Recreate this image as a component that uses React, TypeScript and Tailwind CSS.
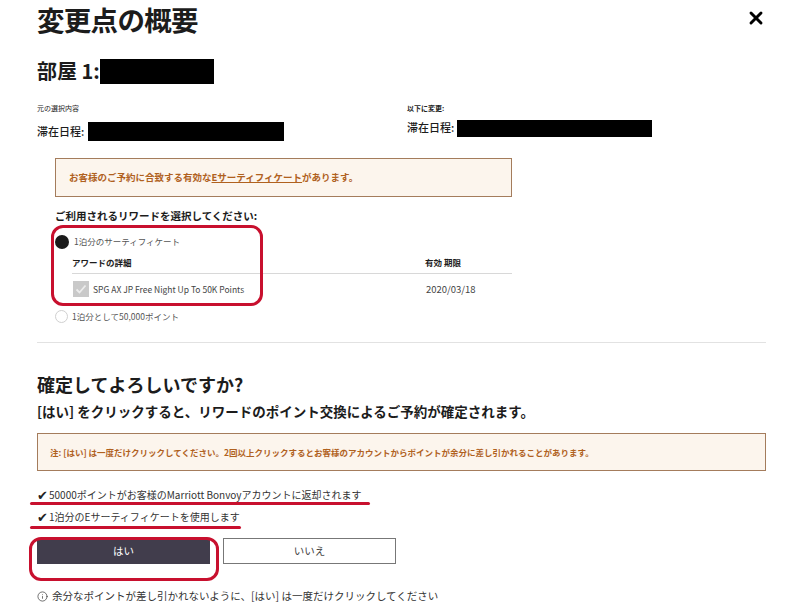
import React from 'react';
import { X, Info } from 'lucide-react';

const jp = { fontFamily: '"Noto Sans CJK JP", "Noto Sans", sans-serif' };

const Redacted: React.FC<{ w: number; h: number }> = ({ w, h }) => (
  <span className="inline-block bg-black align-middle" style={{ width: w, height: h }} />
);

const App: React.FC = () => {
  return (
    <div className="relative w-[800px] h-[608px] overflow-hidden bg-white text-[#1c1c1c]" style={jp}>
      <div className="pl-[37px] pr-[34px]">
        {/* Header */}
        <div className="flex items-start justify-between pt-[4px]">
          <h1 className="text-[27.5px] leading-[30px] font-bold tracking-tight">変更点の概要</h1>
          <X size={20} strokeWidth={3.5} className="mt-[4px] text-black" />
        </div>

        {/* Room */}
        <div className="mt-[24px] flex items-center h-[26px]">
          <span className="text-[20px] font-bold leading-none">部屋 1:</span>
          <span className="inline-block w-[114px] h-[25px] bg-black" />
        </div>

        {/* Dates */}
        <div className="mt-[19px] grid grid-cols-[370px_1fr]">
          <div>
            <div className="text-[7px] leading-[10px]">元の選択内容</div>
            <div className="mt-[8px] flex items-center text-[11px] font-medium">
              <span>滞在日程:</span>
              <span className="ml-[4px]"><Redacted w={196} h={19} /></span>
            </div>
          </div>
          <div>
            <div className="text-[7px] leading-[10px] font-bold">以下に変更:</div>
            <div className="mt-[5px] flex items-center text-[11px] font-medium">
              <span>滞在日程:</span>
              <span className="ml-[3px]"><Redacted w={195} h={17} /></span>
            </div>
          </div>
        </div>

        {/* Certificate notice */}
        <div className="mt-[17px] ml-[18px] w-[457px] h-[39px] border border-[#a47c5c] bg-[#fcf5ed] flex items-center px-[13px]">
          <span className="text-[9.5px] font-bold text-[#b0611e]">
            お客様のご予約に合致する有効な<span className="underline">Eサーティフィケート</span>があります。
          </span>
        </div>

        {/* Reward selection */}
        <div className="ml-[18px] w-[457px]">
          <div className="mt-[12px] text-[10.5px] font-bold leading-[14px]">ご利用されるリワードを選択してください:</div>
          <div className="mt-[12px] flex items-center">
            <span className="w-[14px] h-[14px] rounded-full bg-[#1a1a1a]" />
            <span className="ml-[5px] text-[8.5px] text-[#555]">1泊分のサーティフィケート</span>
          </div>
          <div className="ml-[17px] mt-[7px] flex text-[8.5px] font-bold pb-[5px] border-b border-[#d8d8d8]">
            <span className="w-[353px]">アワードの詳細</span>
            <span>有効 期限</span>
          </div>
          <div className="ml-[18px] mt-[7px] flex items-center">
            <span className="w-[16px] h-[16px] bg-[#c9c9c9] flex items-center justify-center">
              <svg width="12" height="12" viewBox="0 0 12 12">
                <path d="M1.5 6.5 L4.5 9.5 L10.5 2.5" fill="none" stroke="#ececec" strokeWidth="1.8" />
              </svg>
            </span>
            <span className="ml-[4px] w-[333px] text-[8.5px] text-[#444]">SPG AX JP Free Night Up To 50K Points</span>
            <span className="text-[9.5px] text-[#444]">2020/03/18</span>
          </div>
          <div className="mt-[13px] flex items-center">
            <span className="w-[13px] h-[13px] rounded-full border border-[#d0d0d0] bg-white" />
            <span className="ml-[4px] text-[8.5px] text-[#555]">1泊分として50,000ポイント</span>
          </div>
        </div>

        <div className="mt-[19px] border-t border-[#e2e2e2]" />

        {/* Confirm */}
        <h2 className="mt-[30px] text-[18px] font-bold leading-[22px]">確定してよろしいですか?</h2>
        <p className="mt-[7px] text-[13.5px] font-bold leading-[18px]">
          [はい] をクリックすると、リワードのポイント交換によるご予約が確定されます。
        </p>

        <div className="mt-[13px] h-[38px] border border-[#a47c5c] bg-[#fcf5ed] flex items-center px-[12px]">
          <span className="text-[8.5px] font-bold text-[#b0611e]">
            注: [はい] は一度だけクリックしてください。2回以上クリックするとお客様のアカウントからポイントが余分に差し引かれることがあります。
          </span>
        </div>

        <div className="mt-[17px] text-[10px] leading-[14px] text-[#333]">
          <div className="flex items-center"><span className="text-[13px] leading-[14px] text-[#222] mr-[1px]">✔</span>50000ポイントがお客様のMarriott Bonvoyアカウントに返却されます</div>
          <div className="mt-[8px] flex items-center"><span className="text-[13px] leading-[14px] text-[#222] mr-[1px]">✔</span>1泊分のEサーティフィケートを使用します</div>
        </div>

        <div className="mt-[14px] flex gap-[13px]">
          <button className="w-[173px] h-[26px] bg-[#413d4c] text-white text-[10.5px]">はい</button>
          <button className="w-[173px] h-[26px] border border-[#777] bg-white text-[#444] text-[10.5px]">いいえ</button>
        </div>

        <div className="mt-[24px] flex items-center text-[10.5px] text-[#333]">
          <Info size={11} strokeWidth={1.5} className="mr-[4px]" />
          余分なポイントが差し引かれないように、[はい] は一度だけクリックしてください
        </div>
      </div>

      {/* Red annotation marks */}
      <div className="absolute left-[51px] top-[225px] w-[212px] h-[81px] rounded-[12px] border-[3px] border-[#c8102e]" />
      <div className="absolute left-[30px] top-[502px] w-[340px] h-[3px] rounded-full bg-[#c8102e]" />
      <div className="absolute left-[30px] top-[526px] w-[211px] h-[3px] rounded-full bg-[#c8102e]" />
      <div className="absolute left-[29px] top-[537px] w-[190px] h-[44px] rounded-[12px] border-[3px] border-[#c8102e]" />
    </div>
  );
};

export default App;
